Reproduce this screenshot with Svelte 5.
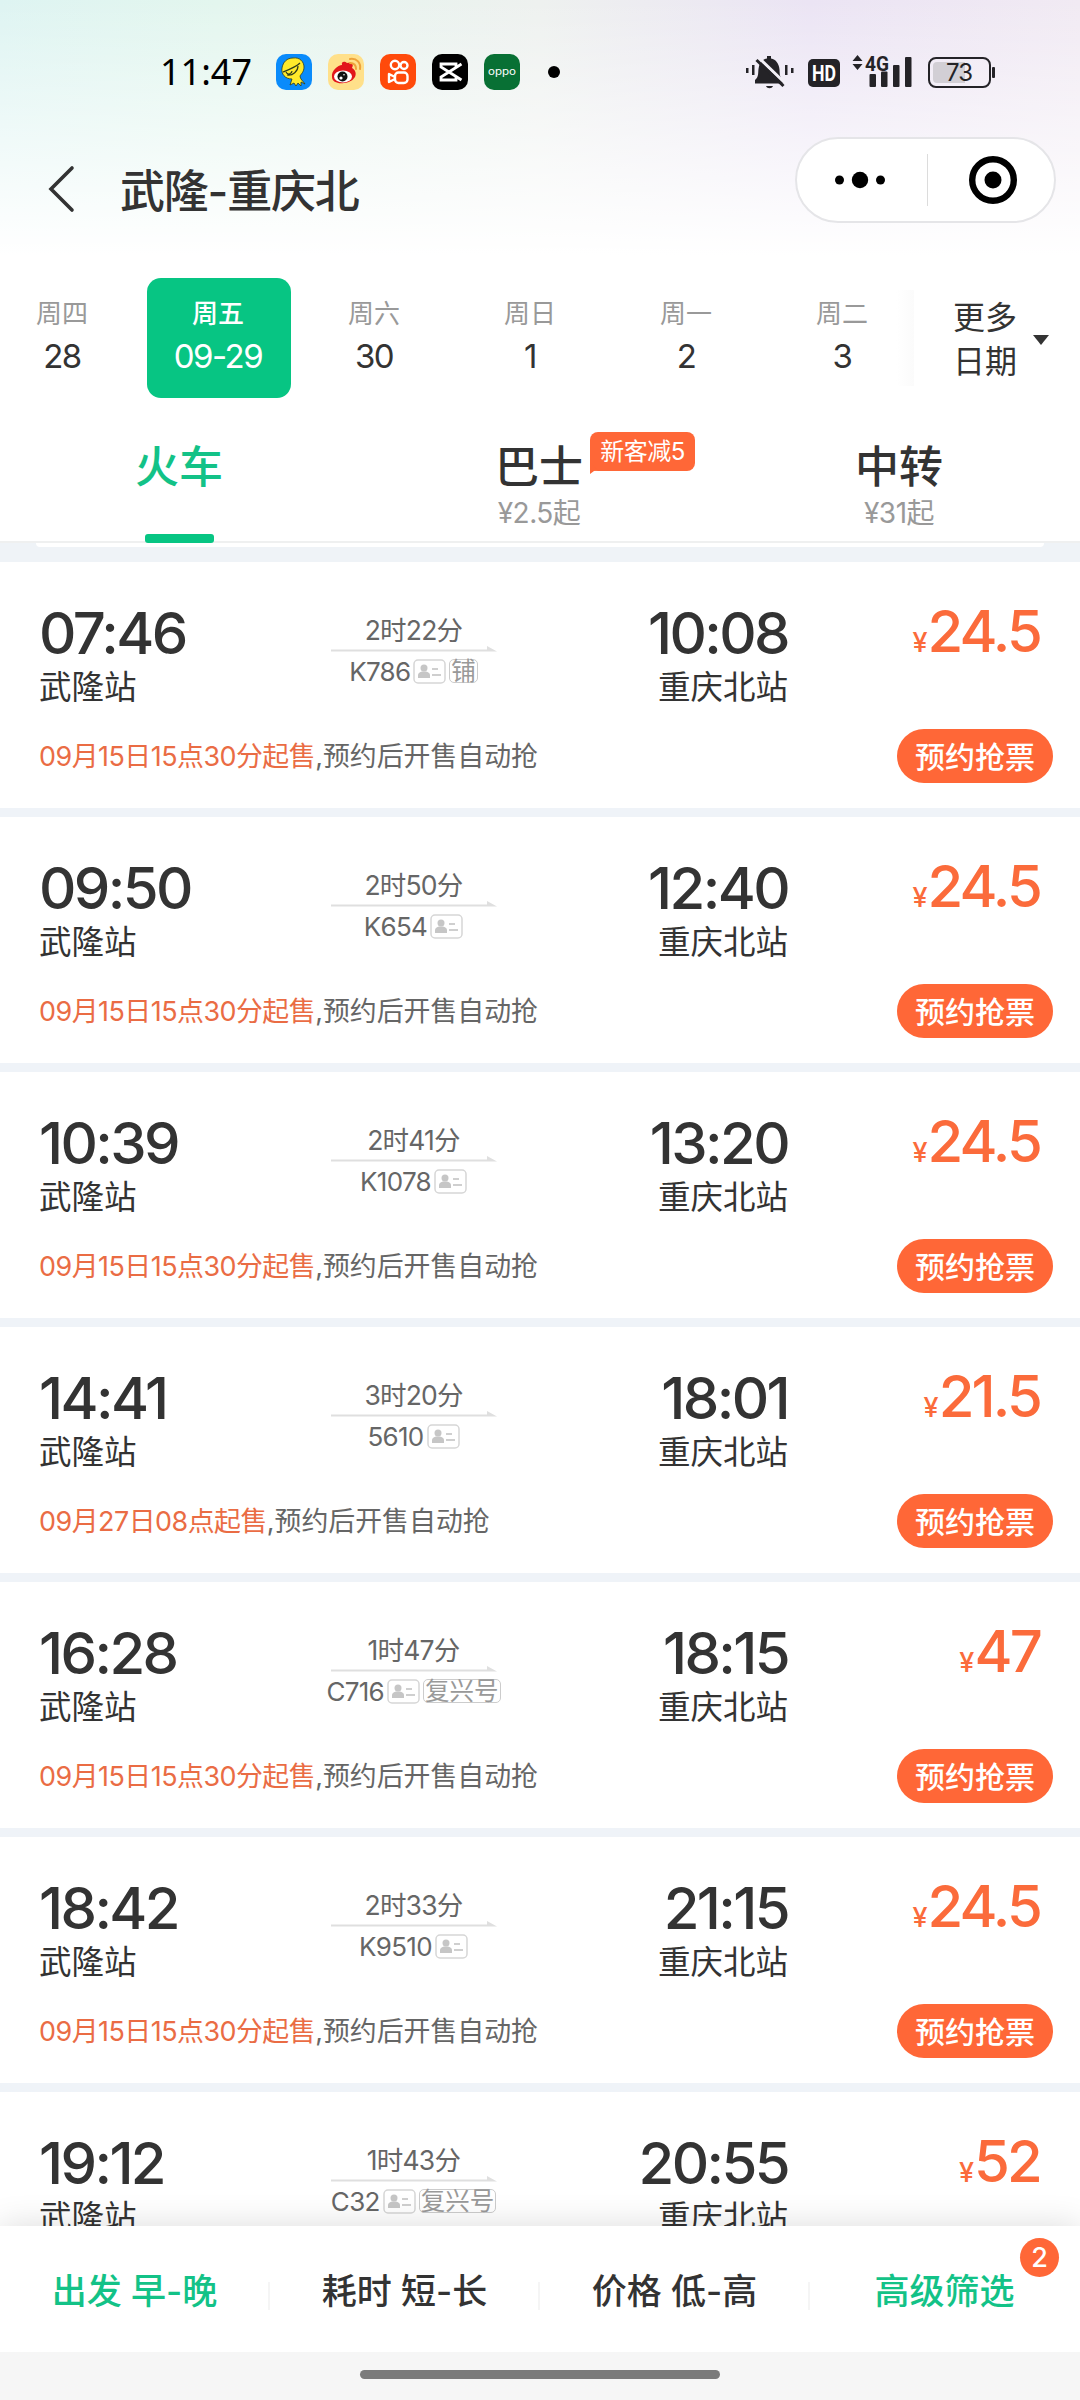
<script lang="ts">
	type Trip = {
		depart: string;
		arrive: string;
		duration: string;
		code: string;
		tag?: string;
		price: string;
		saleAt?: string;
	};

	const days = [
		{ week: '周四', date: '28' },
		{ week: '周五', date: '09-29' },
		{ week: '周六', date: '30' },
		{ week: '周日', date: '1' },
		{ week: '周一', date: '2' },
		{ week: '周二', date: '3' }
	];

	const tabs = [
		{ name: '火车', price: '', tip: '' },
		{ name: '巴士', price: '¥2.5起', tip: '新客减5' },
		{ name: '中转', price: '¥31起', tip: '' }
	];

	const trips: Trip[] = [
		{ depart: '07:46', arrive: '10:08', duration: '2时22分', code: 'K786', tag: '铺', price: '24.5', saleAt: '09月15日15点30分起售' },
		{ depart: '09:50', arrive: '12:40', duration: '2时50分', code: 'K654', price: '24.5', saleAt: '09月15日15点30分起售' },
		{ depart: '10:39', arrive: '13:20', duration: '2时41分', code: 'K1078', price: '24.5', saleAt: '09月15日15点30分起售' },
		{ depart: '14:41', arrive: '18:01', duration: '3时20分', code: '5610', price: '21.5', saleAt: '09月27日08点起售' },
		{ depart: '16:28', arrive: '18:15', duration: '1时47分', code: 'C716', tag: '复兴号', price: '47', saleAt: '09月15日15点30分起售' },
		{ depart: '18:42', arrive: '21:15', duration: '2时33分', code: 'K9510', price: '24.5', saleAt: '09月15日15点30分起售' },
		{ depart: '19:12', arrive: '20:55', duration: '1时43分', code: 'C32', tag: '复兴号', price: '52' }
	];

	const sorts = [
		{ label: '出发 早-晚', on: true, count: 0 },
		{ label: '耗时 短-长', on: false, count: 0 },
		{ label: '价格 低-高', on: false, count: 0 },
		{ label: '高级筛选', on: true, count: 2 }
	];

	let selectedDay = $state(1);
	let selectedTab = $state(0);
</script>

<div class="screen">
	<header class="top">
		<div class="status">
			<span class="clock">11:47</span>
			<div class="apps">
				<svg viewBox="0 0 36 36">
					<rect width="36" height="36" rx="10" fill="#0a8bfb" />
					<path d="M17 4c7-1 11 4 11 9 0 5-3 7-4 9 0 3 3 5 5 8l-4-2v4l-3-3-2 3-2-3-4 2 2-6C9 25 5 20 6 14 7 8 11 4 17 4z" fill="#ffe92b" stroke="#2d3a1c" stroke-width=".8" />
					<path d="M7 18C12 16 20 13 24 9M10 18c2 4 6 1 6-1M11 21c6 1 11-4 11-9" fill="none" stroke="#2d3a1c" stroke-width="1.200" />
				</svg>
				<svg viewBox="0 0 36 36">
					<rect width="36" height="36" rx="10" fill="#ffe08a" />
					<path d="M4 23c-1-6 6-12 10-12-1-4 3-4 5-2 5-1 7 1 5 5 7 4 4 14-8 15C10 30 4 28 4 23z" fill="#e2161b" />
					<ellipse cx="15" cy="22.500" rx="9" ry="6" fill="#fff" />
					<circle cx="14.500" cy="22.500" r="5" fill="#111" />
					<circle cx="13" cy="24" r="1.600" fill="#fff" />
					<circle cx="16" cy="20.800" r=".8" fill="#fff" />
					<path d="M22 5c7-1 11 4 10 10M22 9c4 0 6 2 6 6" fill="none" stroke="#eea33a" stroke-width="2" stroke-linecap="round" />
				</svg>
				<svg viewBox="0 0 36 36">
					<rect width="36" height="36" rx="10" fill="#ff4a0b" />
					<g fill="none" stroke="#fff" stroke-width="2.400">
						<circle cx="15" cy="11" r="4.200" />
						<circle cx="24" cy="11.500" r="3.500" />
						<rect x="15" y="18.500" width="12.500" height="10.500" rx="3.500" />
						<path d="M15 23l-6-3v8l6-3" stroke-linejoin="round" />
					</g>
				</svg>
				<svg viewBox="0 0 36 36">
					<rect width="36" height="36" rx="10" fill="#000" />
					<path d="M29.500 10L9 23v3h15v-3M29.500 26L9 13v-3h15v3" fill="none" stroke="#fff" stroke-width="2.800" />
				</svg>
				<svg viewBox="0 0 36 36">
					<rect width="36" height="36" rx="10" fill="#087034" />
					<text x="18" y="20.500" text-anchor="middle" textLength="28" lengthAdjust="spacingAndGlyphs" class="brand">oppo</text>
				</svg>
				<i class="more-dot"></i>
			</div>
			<svg class="sys" viewBox="0 0 252 36" width="252" height="36">
				<!-- muted bell -->
				<g fill="#242327">
					<path d="M9 29.500V26c4-3 3-8 3.500-11C13 9 17 5 21 4.500V2h4v2.500c5 1 8 5 8.500 11 .3 5 0 8 4 11v3z" />
					<path d="M20 32h7c-1 3-6 3-7 0z" />
					<rect x="0" y="14" width="2.500" height="5" /><rect x="6" y="11" width="2.500" height="10" />
					<rect x="39" y="11" width="2.500" height="10" /><rect x="45" y="14" width="2.500" height="5" />
				</g>
				<path d="M13 4l27 26" stroke="#f3f0f7" stroke-width="3" />
				<path d="M10.500 6l27 26" stroke="#242327" stroke-width="3" />
				<rect x="62" y="5" width="32" height="28" rx="5" fill="#242327" />
				<text x="78" y="27" text-anchor="middle" textLength="24" lengthAdjust="spacingAndGlyphs" class="hd">HD</text>
				<path d="M111.500 1l5 6h-10zM111.500 16l5-6h-10z" fill="#242327" />
				<text x="119" y="16.500" textLength="24" lengthAdjust="spacingAndGlyphs" class="net">4G</text>
				<g fill="#242327">
					<rect x="123.500" y="20" width="6.500" height="13" rx="1" />
					<rect x="135" y="17.500" width="6.500" height="15.500" rx="1" />
					<rect x="147" y="11" width="6.500" height="22" rx="1" />
					<rect x="159" y="3" width="6.500" height="30" rx="1" />
				</g>
				<rect x="183" y="4" width="61" height="29" rx="7" fill="none" stroke="#242327" stroke-width="2" />
				<path d="M191 8h28v21h-28a4 4 0 0 1-4-4V12a4 4 0 0 1 4-4z" fill="#d2cfd5" />
				<rect x="246" y="13" width="3" height="11" rx="1" fill="#242327" />
				<text x="213" y="27" text-anchor="middle" class="level">73</text>
			</svg>
		</div>

		<div class="nav">
			<svg class="back" viewBox="0 0 28 50" width="28" height="50">
				<path d="M24 4L3 25l21 21" fill="none" stroke="#333" stroke-width="3.600" stroke-linecap="round" />
			</svg>
			<h1>武隆-重庆北</h1>
			<div class="capsule">
				<svg viewBox="0 0 50 18" width="50" height="18">
					<circle cx="4.500" cy="9" r="4.500" /><circle cx="25" cy="9" r="8.200" /><circle cx="45.500" cy="9" r="4.500" />
				</svg>
				<i></i>
				<svg viewBox="0 0 48 48" width="48" height="48">
					<circle cx="24" cy="24" r="20.800" fill="none" stroke="#000" stroke-width="6.400" />
					<circle cx="24" cy="24" r="8.500" />
				</svg>
			</div>
		</div>
	</header>

	<section class="dates">
		<div class="days">
			{#each days as day, i}
				<button class="day" class:day--on={selectedDay === i} onclick={() => (selectedDay = i)}>
					<span class="week">{day.week}</span>
					<span class="num">{day.date}</span>
				</button>
			{/each}
		</div>
		<i class="edge"></i>
		<button class="more">
			<span>更多<br />日期</span>
			<svg viewBox="0 0 16 10" width="16" height="10"><path d="M0 0h16L8 10z" fill="#333" /></svg>
		</button>
	</section>

	<nav class="tabs">
		{#each tabs as tab, i}
			<button class="tab" class:tab--on={selectedTab === i} onclick={() => (selectedTab = i)}>
				<span class="tab-name">
					{tab.name}
					{#if tab.tip}<em class="tip">{tab.tip}</em>{/if}
				</span>
				{#if tab.price}<span class="tab-price">{tab.price}</span>{/if}
			</button>
		{/each}
	</nav>
	<div class="fold"><i></i></div>

	<main class="list">
		{#each trips as trip}
			<article class="trip">
				<div class="main-row">
					<div class="stop">
						<b class="time">{trip.depart}</b>
						<span class="station">武隆站</span>
					</div>
					<div class="middle">
						<span class="duration">{trip.duration}</span>
						<svg class="arrow" viewBox="0 0 166 6" width="166" height="6">
							<path d="M0 3.500h156V0l10 5.500H0z" fill="#dfdfdf" />
						</svg>
						<div class="train">
							<span class="code">{trip.code}</span>
							<svg viewBox="0 0 33 25" width="33" height="25">
								<rect x="1" y="1" width="31" height="23" rx="4" fill="#fff" stroke="#d6d6d6" stroke-width="1.500" />
								<circle cx="11" cy="9" r="3.500" fill="#c6c6c6" />
								<path d="M5 19v-3c0-2 2-3 4-3.500h4c2 .5 4 1.500 4 3.500v3z" fill="#c6c6c6" />
								<path d="M19 10h6M19 16h9" stroke="#cfcfcf" stroke-width="2" />
							</svg>
							{#if trip.tag}<span class="tag">{trip.tag}</span>{/if}
						</div>
					</div>
					<div class="stop stop--end">
						<b class="time">{trip.arrive}</b>
						<span class="station">重庆北站</span>
					</div>
					<div class="price"><small>¥</small><b>{trip.price}</b></div>
				</div>
				{#if trip.saleAt}
					<div class="sale-row">
						<p><span>{trip.saleAt}</span>,预约后开售自动抢</p>
						<button class="book">预约抢票</button>
					</div>
				{/if}
			</article>
		{/each}
	</main>

	<footer class="sorts">
		{#each sorts as sort}
			<button class="sort" class:sort--on={sort.on}>
				{sort.label}
				{#if sort.count}<em class="count">{sort.count}</em>{/if}
			</button>
		{/each}
	</footer>
	<div class="home"><i></i></div>
</div>

<style>
	:global(body) {
		background: #fff;
	}

	.screen {
		width: 1080px;
		height: 2400px;
		overflow: hidden;
		display: flex;
		flex-direction: column;
		background: #fff;
		color: #333;
		font-family: Inter, 'Noto Sans CJK SC', sans-serif;
	}

	button {
		padding: 0;
		border: 0;
		background: none;
		color: inherit;
		font: inherit;
	}

	svg {
		display: block;
		overflow: visible;
		flex-shrink: 0;
	}

	.top {
		height: 278px;
		flex-shrink: 0;
		background:
			linear-gradient(to bottom, rgba(255, 255, 255, 0), #fff 92%),
			linear-gradient(to right, #def4f2, #e3f6ee 20%, #eef1ef 50%, #ebe4f4 75%, #f1eaf3);
	}

	.status {
		height: 36px;
		padding: 54px 82px 0 160px;
		display: flex;
		align-items: center;
	}

	.clock {
		width: 116px;
		font-family: 'Noto Sans', sans-serif;
		font-size: 36px;
		line-height: 36px;
		color: #000;
	}

	.apps {
		display: flex;
		align-items: center;
		gap: 16px;
	}

	.apps svg {
		width: 36px;
		height: 36px;
	}

	.brand {
		font: 10px Inter, sans-serif;
		fill: #fff;
	}

	.more-dot {
		width: 12px;
		height: 12px;
		margin-left: 12px;
		border-radius: 50%;
		background: #000;
	}

	.sys {
		margin-left: auto;
	}

	.hd {
		font: 700 22px Roboto, sans-serif;
		fill: #fff;
	}

	.net {
		font: 700 21px Roboto, sans-serif;
		fill: #242327;
	}

	.level {
		font: 24px Inter, sans-serif;
		letter-spacing: -1px;
		fill: #242327;
	}

	.nav {
		height: 86px;
		margin-top: 47px;
		padding: 0 24px 0 48px;
		display: flex;
		align-items: center;
	}

	.back {
		margin-top: 18px;
	}

	h1 {
		margin: 23px auto 0 44px;
		font-size: 45px;
		font-weight: 500;
		line-height: 60px;
		letter-spacing: -1.2px;
	}

	.capsule {
		box-sizing: border-box;
		width: 261px;
		height: 86px;
		padding: 0 37px 0 38px;
		display: flex;
		align-items: center;
		justify-content: space-between;
		border: 2px solid #e5e5e8;
		border-radius: 43px;
		background: #fff;
	}

	.capsule i {
		width: 1px;
		height: 52px;
		background: #dcdcdc;
	}

	.dates {
		height: 120px;
		flex-shrink: 0;
		display: flex;
		align-items: center;
	}

	.days {
		width: 896px;
		display: flex;
		margin-left: -15px;
	}

	.day {
		width: 144px;
		height: 120px;
		margin: 0 6px;
		padding: 13px 2px 0 0;
		flex-shrink: 0;
		box-sizing: border-box;
		display: flex;
		flex-direction: column;
		align-items: center;
		border-radius: 14px;
	}

	.week {
		height: 45px;
		line-height: 46px;
		font-size: 26px;
		color: #999;
	}

	.num {
		line-height: 40px;
		font-size: 33px;
		letter-spacing: -1.5px;
	}

	.day--on {
		background: #07c583;
		color: #fff;
	}

	.day--on .week {
		color: #fff;
		font-weight: 500;
	}

	.edge {
		width: 18px;
		height: 96px;
		margin-left: 15px;
		background: linear-gradient(to right, #fff, #fbfbfb);
	}

	.more {
		margin-left: 39px;
		padding-top: 4px;
		display: flex;
		align-items: center;
		gap: 16px;
		font-size: 32px;
		line-height: 44px;
	}

	.tabs {
		height: 143px;
		flex-shrink: 0;
		display: flex;
		border-bottom: 2px solid #eff0f0;
	}

	.tab {
		flex: 1;
		padding: 38px 2px 0 0;
		display: flex;
		flex-direction: column;
		align-items: center;
		position: relative;
	}

	.tab-name {
		position: relative;
		font-size: 44px;
		font-weight: 500;
		line-height: 62px;
	}

	.tab--on {
		color: #13c287;
	}

	.tab--on::after {
		content: '';
		position: absolute;
		bottom: -2px;
		width: 69px;
		height: 9px;
		border-radius: 3px;
		background: #07c583;
	}

	.tab-price {
		font-size: 28px;
		line-height: 30px;
		letter-spacing: -0.5px;
		color: #999;
	}

	.tip {
		position: absolute;
		left: 95px;
		top: -4px;
		width: 105px;
		height: 39px;
		border-radius: 8px;
		background: #ff6737;
		color: #fff;
		font-size: 24px;
		font-style: normal;
		font-weight: 400;
		line-height: 39px;
		text-align: center;
		letter-spacing: -0.5px;
		white-space: nowrap;
	}

	.tip::after {
		content: '';
		position: absolute;
		left: 0;
		bottom: -3px;
		width: 8px;
		height: 12px;
		background: #ff6737;
		clip-path: polygon(0 0, 100% 70%, 50% 75%, 0 100%);
	}

	.fold {
		height: 19px;
		flex-shrink: 0;
		padding: 0 36px;
		background: #eff3f7;
	}

	.fold i {
		display: block;
		height: 4px;
		background: #fff;
		border-radius: 0 0 8px 8px;
	}

	.list {
		height: 1664px;
		flex-shrink: 0;
		overflow: hidden;
	}

	.trip {
		height: 246px;
		border-bottom: 9px solid #eff3f8;
		background: #fff;
	}

	.main-row {
		height: 150px;
		padding: 0 40px 0 39px;
		display: flex;
	}

	.stop {
		width: 250px;
		padding-top: 36px;
		display: flex;
		flex-direction: column;
	}

	.stop--end {
		width: 250px;
		align-items: flex-end;
	}

	.time {
		font-size: 58px;
		font-weight: 450;
		line-height: 70px;
		letter-spacing: -2.6px;
	}

	.station {
		font-size: 32.5px;
		line-height: 39px;
	}

	.middle {
		width: 249px;
		padding-top: 51px;
		display: flex;
		flex-direction: column;
		align-items: center;
		color: #666;
	}

	.duration {
		font-size: 26.5px;
		line-height: 34px;
		letter-spacing: -0.8px;
	}

	.arrow {
		margin-top: -1px;
	}

	.train {
		height: 38px;
		display: flex;
		align-items: center;
		gap: 3px;
	}

	.code {
		font-size: 26px;
		letter-spacing: -0.7px;
	}

	.tag {
		height: 22px;
		padding: 0 1px;
		border: 1.5px solid #ccc;
		border-radius: 5px;
		color: #999;
		font-size: 24.5px;
		line-height: 22px;
	}

	.price {
		flex: 1;
		padding-top: 34px;
		display: flex;
		align-items: baseline;
		justify-content: flex-end;
		color: #fb6b3b;
	}

	.price b {
		font-size: 58px;
		font-weight: 480;
		line-height: 70px;
		letter-spacing: -2.8px;
	}

	.price small {
		font-size: 27px;
		font-weight: 500;
	}

	.sale-row {
		height: 88px;
		padding: 0 27px 0 39px;
		display: flex;
		align-items: center;
		justify-content: space-between;
	}

	.sale-row p {
		margin: 0 0 4px;
		font-size: 26.900px;
		color: #666;
	}

	.sale-row p span {
		color: #ea6c44;
		letter-spacing: -0.5px;
	}

	.book {
		width: 156px;
		height: 54px;
		padding-bottom: 3px;
		border-radius: 27px;
		background: #ff6737;
		color: #fff;
		font-size: 30px;
		font-weight: 500;
	}

	.sorts {
		height: 126px;
		flex-shrink: 0;
		display: flex;
		background: #fff;
		box-shadow: 0 0 32px rgba(0, 0, 0, 0.14);
		position: relative;
	}

	.sort {
		flex: 1;
		padding: 3px 1px 0 0;
		position: relative;
		font-size: 35px;
		font-weight: 500;
		line-height: 50px;
	}

	.sort + .sort::before {
		content: '';
		position: absolute;
		left: -2px;
		top: 56px;
		width: 2px;
		height: 28px;
		background: #f5f5f5;
	}

	.sort--on {
		color: #13c287;
	}

	.count {
		position: absolute;
		right: 21px;
		top: 12px;
		width: 39px;
		height: 39px;
		border-radius: 50%;
		background: #ff6737;
		color: #fff;
		font-size: 27px;
		font-style: normal;
		line-height: 39px;
	}

	.home {
		height: 48px;
		flex-shrink: 0;
		background: #f6f6f6;
		position: relative;
	}

	.home i {
		display: block;
		width: 360px;
		height: 9px;
		margin: 18px auto 0;
		border-radius: 5px;
		background: #7b7b7b;
	}
</style>
